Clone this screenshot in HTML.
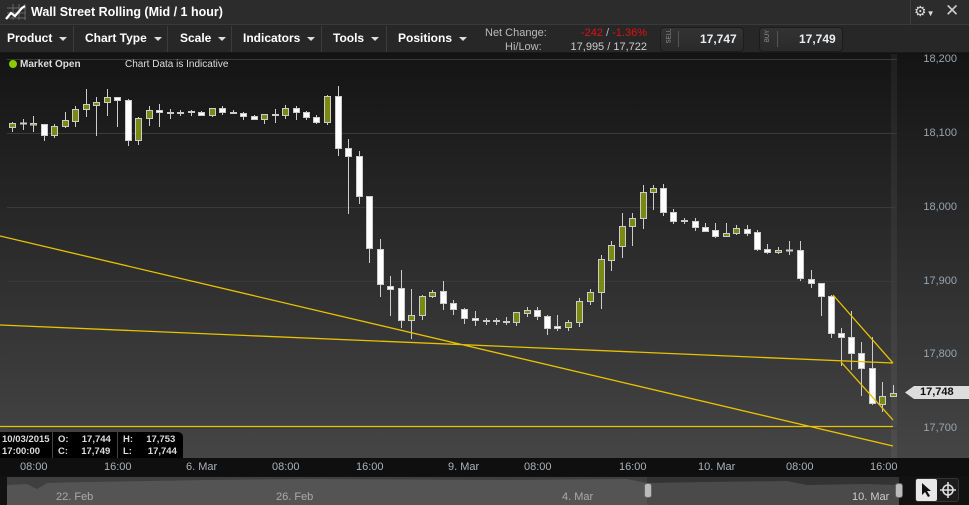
<!DOCTYPE html><html><head><style>
*{margin:0;padding:0;box-sizing:border-box}
body{width:969px;height:505px;overflow:hidden;background:#111;font-family:"Liberation Sans",sans-serif;position:relative}
.t{position:absolute;white-space:nowrap}
#title{position:absolute;left:0;top:0;width:969px;height:25px;background:#2c2c2c;border-bottom:1px solid #3a3a3a}
#tb{position:absolute;left:0;top:25px;width:969px;height:28px;background:#272727;border-bottom:1px solid #1a1a1a}
.m{position:absolute;top:31px;color:#fff;font-size:12px;font-weight:bold}
.m:after{content:"";display:inline-block;margin-left:7px;border-left:4px solid transparent;border-right:4px solid transparent;border-top:4px solid #ddd;vertical-align:middle}
.sep{position:absolute;top:26px;width:1px;height:26px;background:#3c3c3c}
.btn{position:absolute;top:27px;width:84px;height:25px;border-radius:4px;background:linear-gradient(#333,#2a2a2a);border:1px solid #1c1c1c}
.ax{position:absolute;left:905px;width:52px;text-align:right;color:#9aa4ad;font-size:11px}
.tl{position:absolute;top:461px;color:#aab2b8;font-size:11px}
</style></head><body>
<div id="title"></div>
<svg class="t" style="left:5px;top:3px" width="22" height="18" viewBox="0 0 22 18"><g stroke="#666" stroke-width="1" fill="none"><path d="M8 1V17M14 1V17M20 1V17M2 5H21M2 10H21M2 15H21"/></g><path d="M1 16L6 10L10 13L17 5L20 3" stroke="#fff" stroke-width="2.2" fill="none"/></svg>
<div class="t" style="left:31px;top:5px;color:#fff;font-size:12.5px;font-weight:bold">Wall Street Rolling (Mid / 1 hour)</div>
<div class="t" style="left:910px;top:0;width:1px;height:25px;background:#3e3e3e"></div>
<div class="t" style="left:914px;top:3px;color:#ddd;font-size:14px">⚙<span style="font-size:8px">▼</span></div>
<div class="t" style="left:945px;top:1px;color:#ccc;font-size:17px">✕</div>
<div id="tb"></div>
<div class="m" style="left:7px">Product</div><div class="sep" style="left:73px"></div>
<div class="m" style="left:85px">Chart Type</div><div class="sep" style="left:167px"></div>
<div class="m" style="left:180px">Scale</div><div class="sep" style="left:231px"></div>
<div class="m" style="left:243px">Indicators</div><div class="sep" style="left:321px"></div>
<div class="m" style="left:333px">Tools</div><div class="sep" style="left:386px"></div>
<div class="m" style="left:398px">Positions</div>
<div class="t" style="left:485px;top:27px;color:#bbb;font-size:11px">Net Change:</div>
<div class="t" style="left:505px;top:41px;color:#bbb;font-size:11px">Hi/Low:</div>
<div class="t" style="left:560px;top:27px;width:87px;text-align:right;color:#e01010;font-size:11px">-242 <span style="color:#bbb">/</span> -1.36%</div>
<div class="t" style="left:560px;top:41px;width:87px;text-align:right;color:#ccc;font-size:11px">17,995 / 17,722</div>
<div class="btn" style="left:660px"></div><div class="btn" style="left:759px"></div>
<div class="t" style="left:662px;top:33px;color:#999;font-size:6px;transform:rotate(-90deg);transform-origin:center">SELL</div>
<div class="t" style="left:762px;top:33px;color:#999;font-size:6px;transform:rotate(-90deg)">BUY</div>
<div class="t" style="left:678px;top:31px;width:1px;height:16px;background:#555"></div>
<div class="t" style="left:777px;top:31px;width:1px;height:16px;background:#555"></div>
<div class="t" style="left:700px;top:32px;color:#e8eef4;font-size:12px;font-weight:bold">17,747</div>
<div class="t" style="left:799px;top:32px;color:#e8eef4;font-size:12px;font-weight:bold">17,749</div>
<svg class="t" style="left:0;top:54px" width="969" height="404" viewBox="0 54 969 404">
<defs><linearGradient id="g" x1="0" y1="0" x2="0" y2="1"><stop offset="0" stop-color="#141414"/><stop offset="1" stop-color="#454545"/></linearGradient></defs>
<rect x="0" y="54" width="969" height="404" fill="url(#g)"/>
<rect x="891" y="54" width="6" height="404" fill="#fff" opacity=".05"/>
<g stroke="#3a3a3a" stroke-width="1"><path d="M7 59.5H897M7 133.5H897M7 207.5H897M7 281.5H897M7 354.5H897M7 428.5H897"/></g>
<g stroke="#ccc" stroke-width="1" fill="#7a8a10">
<path d="M12.5 122V132M23.5 119V130M33.5 116V132M44.5 124V141M54.5 124V138M65.5 112V128M75.5 106V127M86.5 89V117M96.5 97V136M107.5 89V116M117.5 97V127M128.5 99V146M138.5 117V145M149.5 106V126M159.5 104V127M170.5 109V119M180.5 110V116M191.5 110V116M201.5 111V115M212.5 108V117M222.5 106V115M233.5 110V114M243.5 112V120M254.5 115V119M264.5 114V124M275.5 109V123M285.5 105V119M296.5 106V120M306.5 111V120M316.5 115V124M327.5 95V125M338.5 86V156M348.5 139V214M359.5 151V204M369.5 196V263M380.5 239V297M390.5 276V316M401.5 270V328M411.5 289V339M422.5 295V320M432.5 290V298M443.5 281V310M453.5 300V315M464.5 308V324M475.5 311V326M486.5 318V325M496.5 318V325M506.5 317V325M516.5 312V326M527.5 307V317M537.5 307V320M547.5 315V335M557.5 315V331M568.5 320V331M579.5 298V327M590.5 289V305M601.5 255V309M611.5 241V271M622.5 213V258M632.5 213V246M643.5 185V229M653.5 185V210M663.5 184V216M673.5 209V224M684.5 218V224M695.5 218V231M705.5 223V232M715.5 223V238M726.5 223V237M736.5 225V235M747.5 225V236M757.5 230V251M767.5 244V254M778.5 247V254M789.5 241V255M800.5 241V281M811.5 270V288M821.5 283V316M831.5 295V338M841.5 328V366M851.5 311V370M861.5 342V396M872.5 337V405M882.5 382V412M893.5 385V396"/>
<rect x="9.5" y="123.5" width="6" height="4"/><rect x="20.5" y="123" width="6" height="1"/><rect x="30.5" y="123.5" width="6" height="1.5"/>
<rect x="41.5" y="124.5" width="6" height="11" fill="#fff"/><rect x="51.5" y="126.5" width="6" height="9"/><rect x="62.5" y="120.5" width="6" height="6"/><rect x="72.5" y="109.5" width="6" height="12"/><rect x="83.5" y="104.5" width="6" height="5"/><rect x="93.5" y="102.5" width="6" height="3"/><rect x="104.5" y="97.5" width="6" height="5"/><rect x="114.5" y="97.5" width="6" height="3" fill="#fff"/><rect x="125.5" y="100.5" width="6" height="40" fill="#fff"/><rect x="135.5" y="118.5" width="6" height="22"/><rect x="146.5" y="110.5" width="6" height="8"/><rect x="156.5" y="110.5" width="6" height="2" fill="#fff"/><rect x="167.5" y="112.5" width="6" height="1"/><rect x="177.5" y="112.5" width="6" height="1"/><rect x="188.5" y="111.5" width="6" height="1"/><rect x="198.5" y="112.5" width="6" height="3" fill="#fff"/><rect x="209.5" y="108.5" width="6" height="7"/><rect x="219.5" y="108.5" width="6" height="4" fill="#fff"/><rect x="230.5" y="112.5" width="6" height="1"/><rect x="240.5" y="113.5" width="6" height="3" fill="#fff"/><rect x="251.5" y="116.5" width="6" height="3" fill="#fff"/><rect x="261.5" y="114.5" width="6" height="5"/><rect x="272.5" y="114.5" width="6" height="1"/><rect x="282.5" y="108.5" width="6" height="7"/><rect x="293.5" y="108.5" width="6" height="4" fill="#fff"/><rect x="303.5" y="112.5" width="6" height="5" fill="#fff"/><rect x="313.5" y="117.5" width="6" height="5" fill="#fff"/><rect x="324.5" y="96.5" width="6" height="26"/>
<g fill="#fff"><rect x="335.5" y="96.5" width="6" height="52"/><rect x="345.5" y="148.5" width="6" height="8"/><rect x="356.5" y="156.5" width="6" height="40"/><rect x="366.5" y="196.5" width="6" height="52"/><rect x="377.5" y="249.5" width="6" height="35"/><rect x="387.5" y="286.5" width="6" height="3"/><rect x="398.5" y="288.5" width="6" height="32"/></g>
<rect x="408.5" y="315.5" width="6" height="5"/><rect x="419.5" y="296.5" width="6" height="19"/><rect x="429.5" y="292.5" width="6" height="4"/>
<g fill="#fff"><rect x="440.5" y="291.5" width="6" height="12"/><rect x="450.5" y="303.5" width="6" height="6"/><rect x="461.5" y="309.5" width="6" height="9"/><rect x="472.5" y="318.5" width="6" height="2"/></g>
<rect x="483.5" y="320.5" width="6" height="1"/><rect x="493.5" y="320.5" width="6" height="1"/><rect x="503.5" y="321.5" width="6" height="1"/><rect x="513.5" y="312.5" width="6" height="10"/><rect x="524.5" y="310.5" width="6" height="3"/>
<g fill="#fff"><rect x="534.5" y="310.5" width="6" height="6"/><rect x="544.5" y="316.5" width="6" height="12"/><rect x="554.5" y="326.5" width="6" height="2"/></g>
<rect x="565.5" y="322.5" width="6" height="5"/><rect x="576.5" y="301.5" width="6" height="21"/><rect x="587.5" y="292.5" width="6" height="9"/><rect x="598.5" y="259.5" width="6" height="33"/><rect x="608.5" y="245.5" width="6" height="15"/><rect x="619.5" y="226.5" width="6" height="20"/><rect x="629.5" y="218.5" width="6" height="8"/><rect x="640.5" y="192.5" width="6" height="26"/><rect x="650.5" y="188.5" width="6" height="4"/>
<g fill="#fff"><rect x="660.5" y="188.5" width="6" height="24"/><rect x="670.5" y="212.5" width="6" height="9"/><rect x="681.5" y="220.5" width="6" height="1"/><rect x="692.5" y="221.5" width="6" height="6"/><rect x="702.5" y="227.5" width="6" height="4"/><rect x="712.5" y="230.5" width="6" height="6"/></g>
<rect x="723.5" y="233.5" width="6" height="3"/><rect x="733.5" y="228.5" width="6" height="5"/>
<g fill="#fff"><rect x="744.5" y="229.5" width="6" height="4"/><rect x="754.5" y="232.5" width="6" height="17"/><rect x="764.5" y="249.5" width="6" height="3"/></g>
<rect x="775.5" y="250.5" width="6" height="2"/><rect x="786.5" y="250" width="6" height="1"/>
<g fill="#fff"><rect x="797.5" y="250.5" width="6" height="28"/><rect x="808.5" y="279.5" width="6" height="4"/><rect x="818.5" y="283.5" width="6" height="13"/><rect x="828.5" y="296.5" width="6" height="37"/><rect x="838.5" y="333.5" width="6" height="4"/><rect x="848.5" y="337.5" width="6" height="16"/><rect x="858.5" y="353.5" width="6" height="15"/><rect x="869.5" y="368.5" width="6" height="35"/></g>
<rect x="879.5" y="396.5" width="6" height="8"/><rect x="890.5" y="393.5" width="6" height="3"/>
</g>
<g stroke="#e8c200" stroke-width="1.3" fill="none"><path d="M0 236L893 446M0 325L893 363M0 426.5H893M833 295L893 363M841 362L893 420"/></g>
<path d="M905 392.5L914 386H969V399H914Z" fill="#ddd"/>
</svg>
<div class="t" style="left:920px;top:386px;color:#111;font-size:11px;font-weight:bold">17,748</div>
<div class="ax" style="top:53px">18,200</div><div class="ax" style="top:127px">18,100</div><div class="ax" style="top:201px">18,000</div><div class="ax" style="top:275px">17,900</div><div class="ax" style="top:348px">17,800</div><div class="ax" style="top:422px">17,700</div>
<div class="t" style="left:9px;top:60px;width:8px;height:8px;border-radius:50%;background:#8c0"></div>
<div class="t" style="left:20px;top:59px;color:#ddd;font-size:10px;font-weight:bold">Market Open</div>
<div class="t" style="left:125px;top:59px;color:#ddd;font-size:10px">Chart Data is Indicative</div>
<div class="t" style="left:0;top:432px;width:183px;height:26px;background:#000;border-radius:0 5px 0 0"></div>
<div class="t" style="left:52px;top:432px;width:1px;height:26px;background:#444"></div><div class="t" style="left:117px;top:432px;width:1px;height:26px;background:#444"></div>
<div class="t" style="left:2px;top:434px;color:#ddd;font-size:9.5px;font-weight:bold;line-height:12px">10/03/2015<br>17:00:00</div>
<div class="t" style="left:58px;top:434px;color:#ddd;font-size:9.5px;font-weight:bold;line-height:12px">O:&nbsp;&nbsp;&nbsp;&nbsp;&nbsp;17,744<br>C:&nbsp;&nbsp;&nbsp;&nbsp;&nbsp;17,749</div>
<div class="t" style="left:123px;top:434px;color:#ddd;font-size:9.5px;font-weight:bold;line-height:12px">H:&nbsp;&nbsp;&nbsp;&nbsp;&nbsp;17,753<br>L:&nbsp;&nbsp;&nbsp;&nbsp;&nbsp;&nbsp;17,744</div>
<div class="t" style="left:0;top:458px;width:969px;height:18px;background:#0f0f0f"></div>
<div class="tl" style="left:20px">08:00</div><div class="tl" style="left:104px">16:00</div><div class="tl" style="left:186px">6. Mar</div><div class="tl" style="left:272px">08:00</div><div class="tl" style="left:356px">16:00</div><div class="tl" style="left:448px">9. Mar</div><div class="tl" style="left:524px">08:00</div><div class="tl" style="left:619px">16:00</div><div class="tl" style="left:698px">10. Mar</div><div class="tl" style="left:786px">08:00</div><div class="tl" style="left:870px">16:00</div>
<div class="t" style="left:0;top:476px;width:969px;height:29px;background:#121212"></div>
<svg class="t" style="left:7px;top:477px" width="892" height="28" viewBox="0 0 892 28"><rect width="892" height="28" fill="#333"/><path d="M0 8L20 7L30 12L40 6L80 5L200 3L300 2L500 3L620 2L640 6L700 5L780 4L800 8L860 7L892 8V28H0Z" fill="#4a4a4a"/><path d="M0 0H640V28H0Z" fill="#fff" opacity=".06"/></svg>
<div class="tl" style="left:56px;top:491px;color:#aaa">22. Feb</div><div class="tl" style="left:276px;top:491px;color:#aaa">26. Feb</div><div class="tl" style="left:562px;top:491px;color:#aaa">4. Mar</div><div class="tl" style="left:852px;top:491px;color:#ccc">10. Mar</div>
<div class="t" style="left:644px;top:483px;width:8px;height:15px;background:#bbb;border-radius:3px;border:1px solid #666"></div>
<div class="t" style="left:895px;top:483px;width:8px;height:15px;background:#bbb;border-radius:3px;border:1px solid #666"></div>
<div class="t" style="left:915px;top:478px;width:44px;height:24px;background:#1c1c1c;border-radius:3px;border:1px solid #333"></div>
<div class="t" style="left:916px;top:479px;width:21px;height:22px;background:#e8e8e8;border-radius:2px"></div>
<svg class="t" style="left:920px;top:482px" width="12" height="16"><path d="M2 1V13L5 10L8 15L10 14L7 9H11Z" fill="#111"/></svg>
<svg class="t" style="left:939px;top:481px" width="18" height="18"><circle cx="9" cy="9" r="5" stroke="#ddd" stroke-width="1.6" fill="none"/><path d="M9 1V17M1 9H17" stroke="#ddd" stroke-width="1.6"/></svg>
</body></html>
